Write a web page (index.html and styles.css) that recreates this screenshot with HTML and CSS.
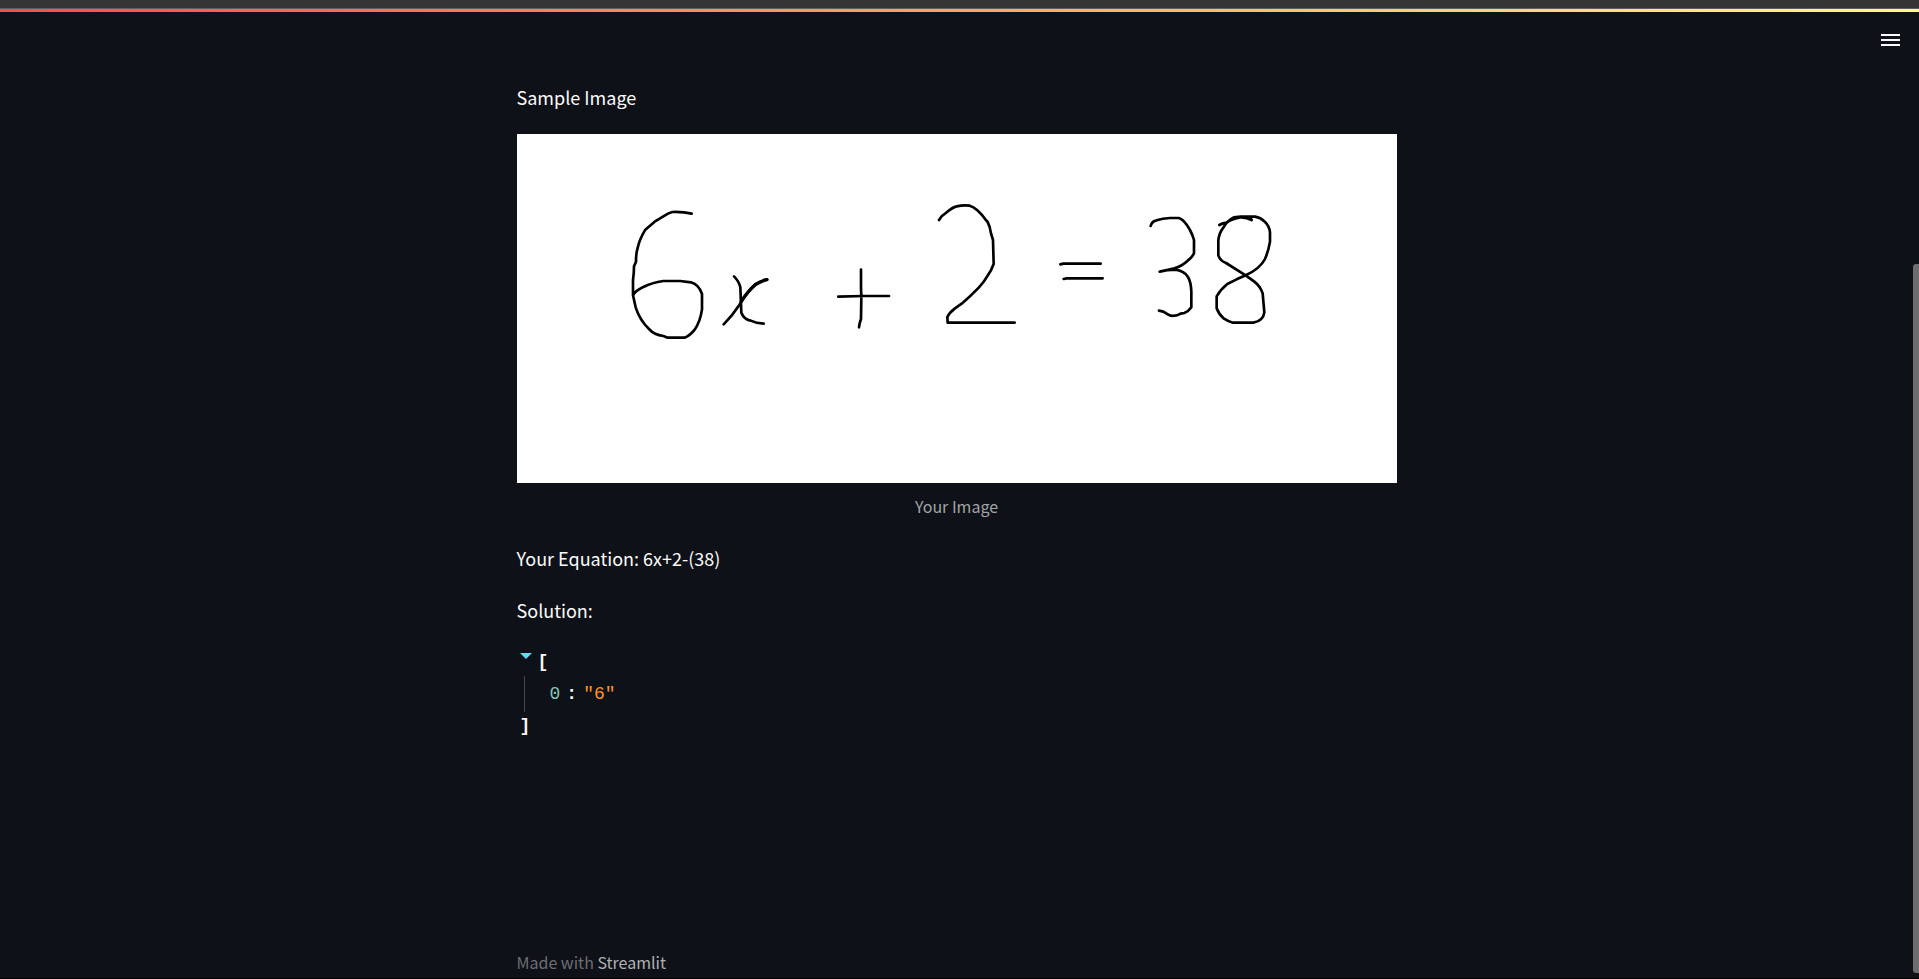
FILE: index.html
```html
<!DOCTYPE html>
<html lang="en">
<head>
<meta charset="utf-8">
<meta name="viewport" content="width=device-width, initial-scale=1">
<title>Equation Solver</title>
<link rel="stylesheet" href="styles.css">
</head>
<body>
<div class="window-edge"></div>
<div class="decoration"></div>
<header class="toolbar">
  <button class="menu-button" type="button" aria-label="Main menu">
    <svg viewBox="0 0 20 14" width="20" height="14" fill="none" stroke="#fafafa" stroke-width="2"><path d="M0 2h19M0 7h19M0 12h19"/></svg>
  </button>
</header>
<main class="content">
  <p class="text">Sample Image</p>
  <figure class="figure">
    <svg class="drawing" viewBox="0 0 880 349" role="img" aria-label="Handwritten equation">
      <g transform="translate(83 56) scale(.33333)">
        <path d="M275 71L252 67Q230 65 217 66Q205 69 195 76L164 95L136 119Q118 149 113 174Q108 188 108 215L102 229Q102 250 99 270L99 316Q107 301 130 291Q155 278 190 273H240L273 277Q297 284 306 312V358Q301 394 284 419Q270 437 254 443H203L190 438Q163 435 147 417Q119 390 107 352L99 316"/>
        <path d="M402 259Q417 274 421 292L424 368Q432 388 452 392Q468 400 491 401"/>
        <path d="M371 403Q398 376 418 345Q438 309 466 283Q482 272 502 269"/>
        <path stroke-width="10" d="M424 334Q443 304 466 284Q482 273 500 269"/>
      </g>
      <g transform="translate(303 56) scale(.33333)">
        <path d="M123 239V294L124 320L123 387L119 400L117 412M55 320L130 318H207"/>
        <path d="M357 90Q366 75 380 67Q397 52 410 49Q431 44 449 47Q460 50 472 61Q488 76 496 88L503 96Q510 109 513 130L519 150L521 222Q513 244 503 257Q493 275 477 292Q450 320 425 341L405 355Q388 368 382 381L383 398H584"/>
      </g>
      <g transform="translate(523 56) scale(.33333)">
        <path d="M61 223L70 221H182M71 267L80 265H188"/>
        <path d="M332 108Q336 93 350 91Q367 85 390 84H416Q429 88 440 104L450 120Q458 135 462 150V190Q458 200 443 212Q426 228 403 235Q380 240 359 245Q380 239 408 239Q434 244 444 261Q453 276 454 305V352Q446 364 433 369L422 371Q410 379 392 377Q380 372 370 365L357 362"/>
        <path d="M538 105Q548 99 560 98Q571 88 600 82Q620 81 635 90M634 88Q620 82 602 80L645 80Q662 83 673 94Q689 109 690 128V155Q686 181 675 207Q660 236 617 256L590 268L562 282Q541 299 530 319V355Q537 374 551 385Q564 394 579 398H640Q670 392 673 367L668 310Q660 288 643 275L617 256L558 219Q541 213 535 196V150Q538 128 550 113Q562 91 581 82L602 80"/>
      </g>
    </svg>
    <figcaption class="caption">Your Image</figcaption>
  </figure>
  <p class="text">Your Equation: 6x+2-(38)</p>
  <p class="text">Solution:</p>
  <div class="json">
    <div class="json-open"><button class="json-toggle" type="button" aria-label="Collapse list"><svg viewBox="0 0 12 6" width="12" height="6"><path d="M0 0h12L6 6z" fill="#66d9ef"/></svg></button><span class="bracket">[</span></div>
    <div class="json-item"><span class="json-key">0</span><span class="json-colon">:</span><span class="json-value">"6"</span></div>
    <div class="bracket json-close">]</div>
  </div>
</main>
<footer class="footer">Made with <a class="footer-link" href="#">Streamlit</a></footer>
<div class="scrollbar"></div>
</body>
</html>
```
FILE: styles.css
```css
* { box-sizing: border-box; }
body {
  margin: 0;
  min-height: 100vh;
  display: flex;
  flex-direction: column;
  background: #0e1117;
  color: #fafafa;
  font: 18px/32px "Noto Sans CJK SC", "Open Sans", sans-serif;
  border-bottom: 1px solid #000;
}
.window-edge {
  height: 9px;
  background: #353535;
  border-bottom: 1px solid #5c6061;
}
.decoration {
  height: 3px;
  background: linear-gradient(90deg, #ff4b4b, #fffd80);
}
.toolbar {
  display: flex;
  justify-content: flex-end;
  padding: 21px 18px 0 0;
  height: 69px;
}
button {
  display: flex;
  padding: 0;
  border: 0;
  background: none;
  cursor: pointer;
}
.menu-button { height: 16px; }
.content, .footer {
  width: calc(100% - 6px);
  max-width: 886px;
  padding: 0 6px 0 0;
  margin: 0 auto;
}
.content {
  flex: 1;
  display: flex;
  flex-direction: column;
  gap: 20px;
}
.text { margin: 0; }
.figure { margin: 1px 0; }
.drawing {
  display: block;
  width: 100%;
  background: #fff;
  fill: none;
  stroke: #000;
  stroke-width: 8;
  stroke-linecap: round;
  stroke-linejoin: round;
}
.caption {
  padding: 9px 0 1px;
  font-size: 16px;
  line-height: 28px;
  text-align: center;
  color: #a3a4a6;
}
.json {
  font: 18px/28px "Liberation Mono", monospace;
  padding: 2px 0 0 3px;
}
.json-open {
  display: flex;
  gap: 6px;
}
.json-toggle { padding-top: 5px; }
.bracket {
  font-weight: 700;
  color: #f9f8f5;
}
.json-item {
  display: flex;
  margin-left: 4px;
  padding-left: 25px;
  border-left: 1px solid #49483e;
  line-height: 36px;
}
.json-key { color: #7fc8b8; }
.json-colon {
  margin: 0 6px;
  font-weight: 700;
}
.json-value { color: #fd971f; }
.footer {
  padding-bottom: 1px;
  line-height: 30px;
  font-size: 16px;
  color: #6c6e73;
}
.footer-link {
  color: #b0b1b3;
  text-decoration: none;
}
.scrollbar {
  position: fixed;
  top: 264px;
  right: 0;
  bottom: 6px;
  width: 6px;
  border-radius: 3px 0 0 3px;
  background: #6d6d70;
}
```
